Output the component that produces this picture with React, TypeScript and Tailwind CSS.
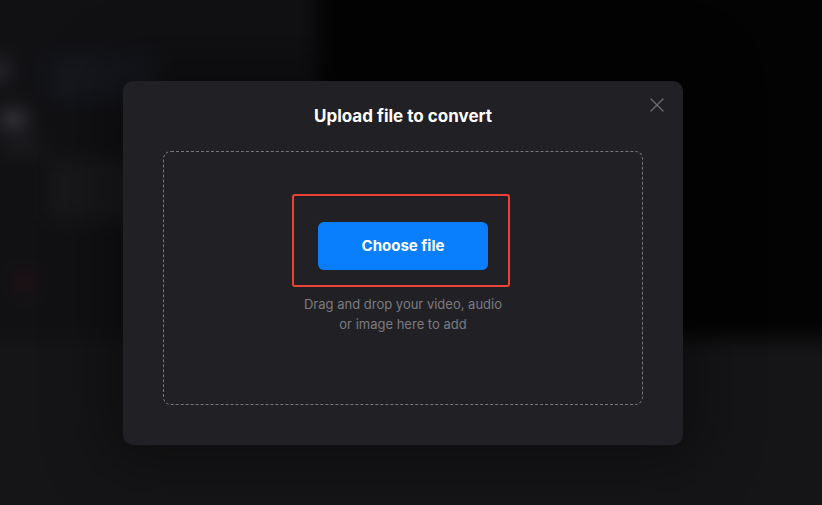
import { X } from 'lucide-react'

// Blurred app shell behind the dialog; overscanned by 20px so the blur has no soft edges.
function Backdrop() {
  return (
    <div className="-m-5 flex h-[545px] w-[862px] flex-col blur-[10px]">
      <div className="flex h-[358px]">
        <div className="flex w-[338px] bg-[#111114] pl-5">
          <div className="flex w-[40px] flex-col gap-4 pt-[78px]">
            <div className="-ml-[8px] h-[24px] w-[14px] rounded bg-[#34343a]" />
            <div className="mt-[14px] h-[14px] w-[26px] rounded bg-[#4a4a50]" />
            <div className="h-[8px] w-[44px] rounded bg-[#26262a]" />
            <div className="mt-[110px] ml-[18px] h-[14px] w-[14px] rounded-full bg-[#3d1418]" />
          </div>
          <div className="flex flex-1 flex-col gap-5 pt-[75px] pl-[8px]">
            <div className="h-[45px] w-[110px] rounded bg-[#15171d]" />
            <div className="mt-[40px] h-[60px] w-[100px] rounded bg-[#18181b]" />
          </div>
        </div>
        <div className="flex-1 bg-[#030303]" />
      </div>
      <div className="flex-1 bg-[#151517]" />
    </div>
  )
}

export default function App() {
  return (
    <div
      className="relative h-[505px] w-[822px] overflow-hidden bg-[#151517]"
      style={{ fontFamily: 'Inter, "Noto Sans", sans-serif' }}
    >
      <Backdrop />

      <div className="absolute top-[81px] left-[123px] flex h-[364px] w-[560px] flex-col rounded-[10px] bg-[#212125] px-10 pb-10 shadow-[0_0_60px_20px_rgba(0,0,0,0.35)]">
        <button className="absolute top-[12px] right-[14px] flex h-6 w-6 items-center justify-center text-[#6c6c72]">
          <X size={24} strokeWidth={1.3} />
        </button>
        <h2 className="flex h-[70px] items-center justify-center pt-[2px] text-[17px] font-bold text-white">
          Upload file to convert
        </h2>
        <div className="flex flex-1 flex-col items-center justify-center rounded-lg border border-dashed border-[#77777c]">
          <div className="relative">
            <button className="flex h-12 w-[170px] items-center justify-center rounded-md bg-[#0a7ffd] text-[15px] font-bold text-white">
              Choose file
            </button>
            <div className="pointer-events-none absolute -top-[28px] -right-[22px] -bottom-[17px] -left-[26px] rounded-[3px] border-2 border-[#ea4335]" />
          </div>
          <p className="mt-6 text-center text-[13px] leading-5 text-[#7b7b80]">
            Drag and drop your video, audio
            <br />
            or image here to add
          </p>
        </div>
      </div>
    </div>
  )
}
